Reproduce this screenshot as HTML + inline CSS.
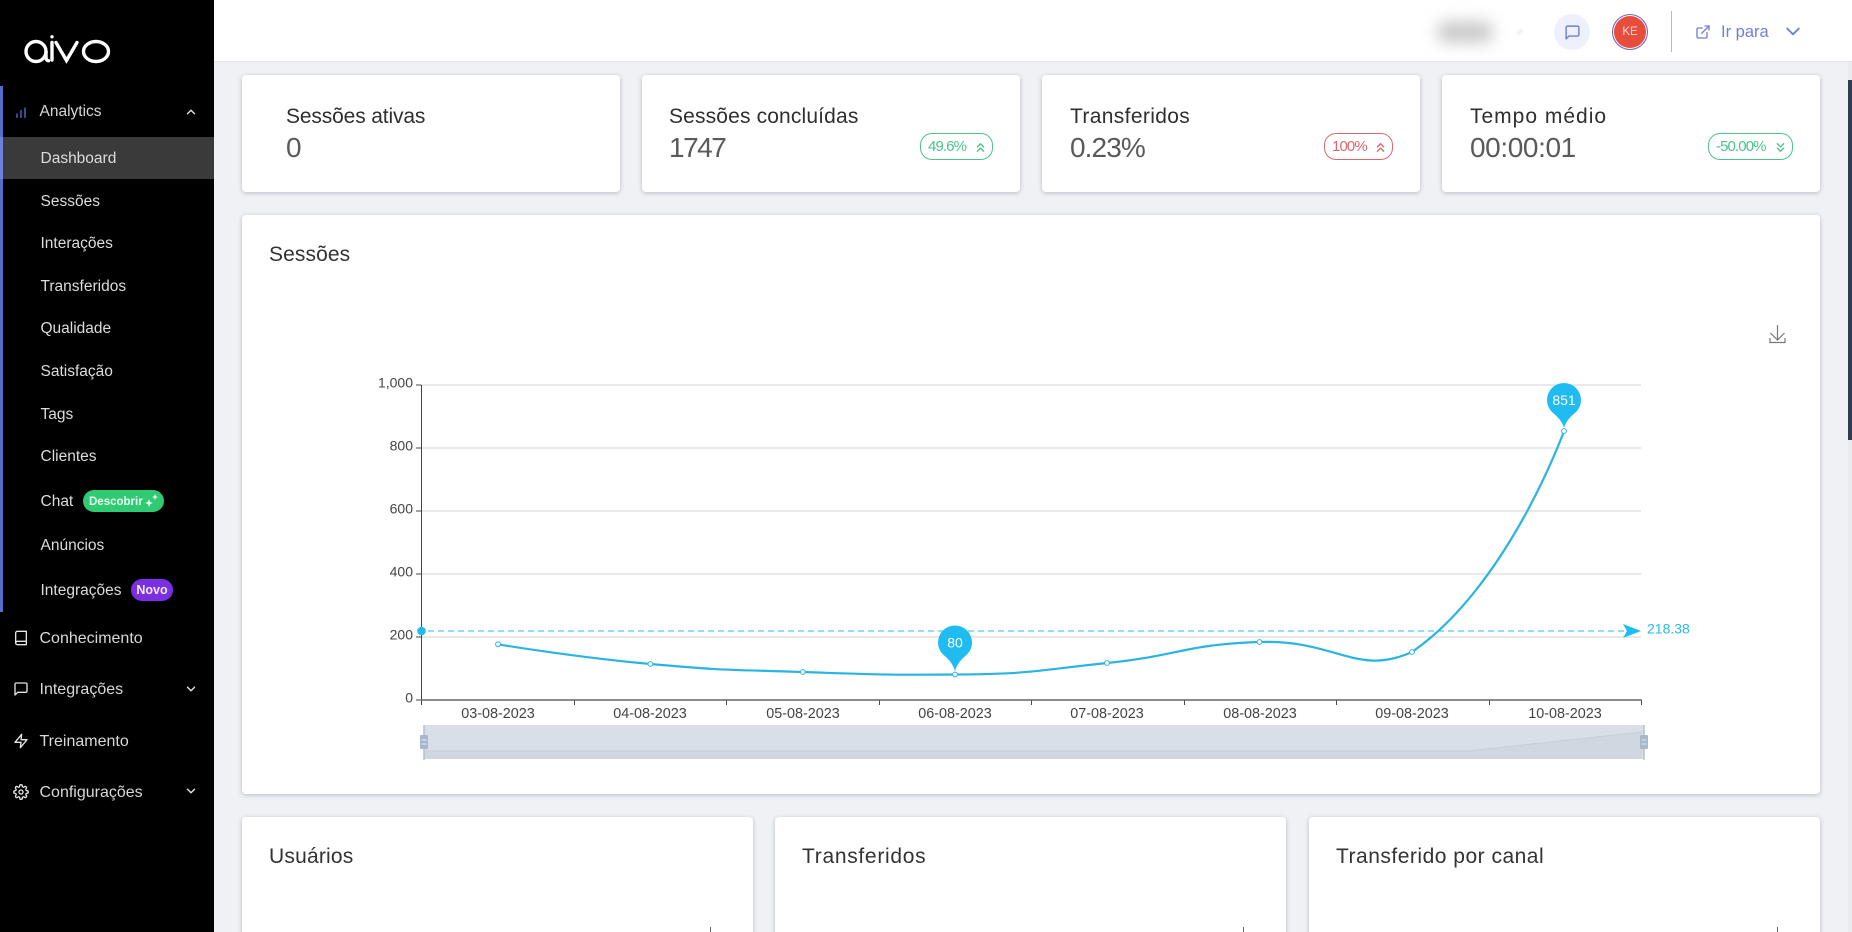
<!DOCTYPE html>
<html lang="pt">
<head>
<meta charset="utf-8">
<title>Aivo Dashboard</title>
<style>
html,body{margin:0;padding:0;width:1852px;height:932px;overflow:hidden;background:#eff1f5;font-family:"Liberation Sans",sans-serif}
*{box-sizing:border-box}
#wrap{position:relative;width:1852px;height:932px;overflow:hidden;background:#eff1f5}
.a{position:absolute}
#side{left:0;top:0;width:214px;height:932px;background:#000}
#top{left:214px;top:0;width:1638px;height:62px;background:#fff;border-bottom:1px solid #e4e6ea}
.n{position:absolute;left:40.5px;height:22px;line-height:22px;font-size:15.5px;color:#dcdcdc;white-space:nowrap}
.m{position:absolute;left:39.5px;height:22px;line-height:22px;font-size:16px;color:#d8d8d8;white-space:nowrap}
.i{position:absolute;left:13px;width:16px;height:16px;fill:none;stroke:#e4e4e4;stroke-width:2;stroke-linecap:round;stroke-linejoin:round}
.c{position:absolute;left:184px;width:14px;height:14px;fill:none;stroke:#e4e4e4;stroke-width:2.4;stroke-linecap:round;stroke-linejoin:round}
.card{position:absolute;background:#fff;border-radius:4px;box-shadow:0 1px 5px rgba(40,50,70,.28)}
.t{position:absolute;font-size:21px;line-height:26px;color:#2f2f2f;white-space:nowrap}
.v{position:absolute;font-size:28px;line-height:34px;color:#5a5a5a;white-space:nowrap}
.b{position:absolute;top:133px;height:27px;border-radius:12px;border:1px solid;font-size:15px;line-height:25px;letter-spacing:-.9px;white-space:nowrap;padding-left:7px;background:#fff}
.b svg{position:absolute;top:5.5px;width:15px;height:15px;fill:none;stroke:currentColor;stroke-width:2.2;stroke-linecap:round;stroke-linejoin:round}
.h{position:absolute;font-size:21px;line-height:26px;color:#333;white-space:nowrap}
svg text{font-family:"Liberation Sans",sans-serif}
</style>
</head>
<body>
<div id="wrap">
<div class="a" id="top"></div>

<!-- blurred account -->
<div class="a" style="left:1437px;top:22px;width:56px;height:20px;background:#c6c6c6;filter:blur(8px);border-radius:9px"></div>
<div class="a" style="left:1516px;top:31px;width:7px;height:1.5px;background:#e4e4e4;transform:rotate(-45deg);filter:blur(1px)"></div>
<div class="a" style="left:1554px;top:14px;width:36px;height:36px;border-radius:50%;background:#eef0fb"></div>
<svg class="a" style="left:1563.5px;top:23.5px;width:17px;height:17px;fill:none;stroke:#6f7fd6;stroke-width:2;stroke-linecap:round;stroke-linejoin:round" viewBox="0 0 24 24"><path d="M21 15a2 2 0 0 1-2 2H7l-4 4V5a2 2 0 0 1 2-2h14a2 2 0 0 1 2 2z"/></svg>
<div class="a" style="left:1612px;top:14px;width:36px;height:36px;border-radius:50%;background:#e74c3c;border:1px solid #7367c8;box-shadow:inset 0 0 0 1px #fff;color:#fbdcd8;font-size:11.5px;line-height:34px;text-align:center">KE</div>
<div class="a" style="left:1671px;top:11px;width:1px;height:41px;background:#b9bcc4"></div>
<svg class="a" style="left:1695px;top:24px;width:16px;height:16px;fill:none;stroke:#6f7fd6;stroke-width:2;stroke-linecap:round;stroke-linejoin:round" viewBox="0 0 24 24"><path d="M18 13v6a2 2 0 0 1-2 2H5a2 2 0 0 1-2-2V8a2 2 0 0 1 2-2h6"/><polyline points="15 3 21 3 21 9"/><line x1="10" y1="14" x2="21" y2="3"/></svg>
<div class="a" style="left:1721px;top:21px;font-size:16.5px;line-height:22px;color:#6f7fd6;white-space:nowrap">Ir para</div>
<svg class="a" style="left:1783px;top:21px;width:20px;height:20px;fill:none;stroke:#6f7fd6;stroke-width:2.2;stroke-linecap:round;stroke-linejoin:round" viewBox="0 0 24 24"><polyline points="5 9 12 16 19 9"/></svg>

<!-- scrollbar -->
<div class="a" style="left:1848px;top:62px;width:4px;height:870px;background:#e9ebef"></div>
<div class="a" style="left:1848px;top:80px;width:4px;height:360px;background:#2c3e50"></div>

<!-- sidebar -->
<div class="a" id="side">
  <svg class="a" style="left:22px;top:34px;width:92px;height:32px" viewBox="22 36 92 32" fill="none" stroke="#fff" stroke-width="3.4" stroke-linecap="round" role="img">
    <title>aivo</title>
    <circle cx="36" cy="53.5" r="10"/><path d="M46 53.5v5.5c0 2 .8 3.7 2.5 3.7"/>
    <path d="M52 44.5v17.5"/><circle cx="52" cy="38.8" r="1.7" fill="#fff" stroke="none"/>
    <path d="M56 44.5l10.5 18L77 44.5"/>
    <ellipse cx="96" cy="53.5" rx="12.5" ry="10"/>
  </svg>
  <div class="a" style="left:0;top:86px;width:3px;height:526px;background:#5a6cc9"></div>
  <div class="a" style="left:0;top:137px;width:214px;height:42px;background:#3a3a3a"></div>
  <div class="a" style="left:0;top:137px;width:3px;height:42px;background:#6f80dd"></div>

  <svg class="i" style="top:104px;stroke:#5a6cd6" viewBox="0 0 24 24"><line x1="18" y1="20" x2="18" y2="6"/><line x1="12" y1="20" x2="12" y2="10"/><line x1="6" y1="20" x2="6" y2="15"/></svg>
  <div class="m" style="top:101px;font-size:15.5px">Analytics</div>
  <svg class="c" style="top:105px" viewBox="0 0 24 24"><polyline points="6 15 12 9 18 15"/></svg>

  <div class="n" style="top:148px">Dashboard</div>
  <div class="n" style="top:191px">Sessões</div>
  <div class="n" style="top:233px">Interações</div>
  <div class="n" style="top:276px">Transferidos</div>
  <div class="n" style="top:318px">Qualidade</div>
  <div class="n" style="top:361px">Satisfação</div>
  <div class="n" style="top:404px">Tags</div>
  <div class="n" style="top:446px">Clientes</div>
  <div class="n" style="top:491px">Chat</div>
  <div class="a" style="left:83px;top:490px;width:81px;height:22px;border-radius:11px;background:#2ecb72;color:#e9fff2;font-size:11.5px;font-weight:bold;line-height:24px;padding-left:6px;white-space:nowrap">Descobrir</div>
  <svg class="a" style="left:144px;top:493px;width:16px;height:16px" viewBox="0 0 16 16" fill="#fff"><path d="M5 6l1 3 3 1-3 1-1 3-1-3-3-1 3-1z"/><path d="M11 1l.8 2.2L14 4l-2.2.8L11 7l-.8-2.2L8 4l2.2-.8z"/></svg>
  <div class="n" style="top:535px">Anúncios</div>
  <div class="n" style="top:580px">Integrações</div>
  <div class="a" style="left:131px;top:579px;width:42px;height:22px;border-radius:11px;background:#7b2fe3;color:#f2e9ff;font-size:12.5px;font-weight:bold;line-height:23px;text-align:center">Novo</div>

  <svg class="i" style="top:630px" viewBox="0 0 24 24"><path d="M4 19.5A2.5 2.5 0 0 1 6.5 17H20"/><path d="M6.5 2H20v20H6.5A2.5 2.5 0 0 1 4 19.5v-15A2.5 2.5 0 0 1 6.5 2z"/></svg>
  <div class="m" style="top:628px">Conhecimento</div>
  <svg class="i" style="top:681px" viewBox="0 0 24 24"><path d="M21 15a2 2 0 0 1-2 2H7l-4 4V5a2 2 0 0 1 2-2h14a2 2 0 0 1 2 2z"/></svg>
  <div class="m" style="top:679px">Integrações</div>
  <svg class="c" style="top:682px" viewBox="0 0 24 24"><polyline points="6 9 12 15 18 9"/></svg>
  <svg class="i" style="top:733px" viewBox="0 0 24 24"><polygon points="13 2 3 14 12 14 11 22 21 10 12 10 13 2"/></svg>
  <div class="m" style="top:731px">Treinamento</div>
  <svg class="i" style="top:784px" viewBox="0 0 24 24"><circle cx="12" cy="12" r="3"/><path d="M19.4 15a1.65 1.65 0 0 0 .33 1.82l.06.06a2 2 0 0 1 0 2.83 2 2 0 0 1-2.83 0l-.06-.06a1.65 1.65 0 0 0-1.82-.33 1.65 1.65 0 0 0-1 1.51V21a2 2 0 0 1-2 2 2 2 0 0 1-2-2v-.09A1.65 1.65 0 0 0 9 19.4a1.65 1.65 0 0 0-1.82.33l-.06.06a2 2 0 0 1-2.83 0 2 2 0 0 1 0-2.83l.06-.06a1.65 1.65 0 0 0 .33-1.82 1.65 1.65 0 0 0-1.51-1H3a2 2 0 0 1-2-2 2 2 0 0 1 2-2h.09A1.65 1.65 0 0 0 4.6 9a1.65 1.65 0 0 0-.33-1.82l-.06-.06a2 2 0 0 1 0-2.83 2 2 0 0 1 2.83 0l.06.06a1.65 1.65 0 0 0 1.82.33H9a1.65 1.65 0 0 0 1-1.51V3a2 2 0 0 1 2-2 2 2 0 0 1 2 2v.09a1.65 1.65 0 0 0 1 1.51 1.65 1.65 0 0 0 1.82-.33l.06-.06a2 2 0 0 1 2.83 0 2 2 0 0 1 0 2.83l-.06.06a1.65 1.65 0 0 0-.33 1.82V9a1.65 1.65 0 0 0 1.51 1H21a2 2 0 0 1 2 2 2 2 0 0 1-2 2h-.09a1.65 1.65 0 0 0-1.51 1z"/></svg>
  <div class="m" style="top:782px">Configurações</div>
  <svg class="c" style="top:784px" viewBox="0 0 24 24"><polyline points="6 9 12 15 18 9"/></svg>
</div>

<!-- stat cards -->
<div class="card" style="left:242px;top:75px;width:378px;height:117px"></div>
<div class="card" style="left:642px;top:75px;width:378px;height:117px"></div>
<div class="card" style="left:1042px;top:75px;width:378px;height:117px"></div>
<div class="card" style="left:1442px;top:75px;width:378px;height:117px"></div>

<div class="t" style="left:286px;top:104px;letter-spacing:-.14px">Sessões ativas</div>
<div class="v" style="left:286px;top:131px">0</div>
<div class="t" style="left:669px;top:104px;letter-spacing:.15px">Sessões concluídas</div>
<div class="v" style="left:669px;top:131px;letter-spacing:-1.5px">1747</div>
<div class="b" style="left:920px;width:73px;color:#4cc38a;border-color:#4cc38a">49.6%<svg style="left:52px" viewBox="0 0 24 24"><polyline points="17 11 12 6 7 11"/><polyline points="17 18 12 13 7 18"/></svg></div>
<div class="t" style="left:1070px;top:104px;letter-spacing:.35px">Transferidos</div>
<div class="v" style="left:1070px;top:131px;letter-spacing:-.9px">0.23%</div>
<div class="b" style="left:1324px;width:69px;color:#d9696c;border-color:#d9696c">100%<svg style="left:48px" viewBox="0 0 24 24"><polyline points="17 11 12 6 7 11"/><polyline points="17 18 12 13 7 18"/></svg></div>
<div class="t" style="left:1470px;top:104px;letter-spacing:1px">Tempo médio</div>
<div class="v" style="left:1470px;top:131px;letter-spacing:-.4px">00:00:01</div>
<div class="b" style="left:1708px;width:85px;color:#4cc38a;border-color:#4cc38a">-50.00%<svg style="left:64px" viewBox="0 0 24 24"><polyline points="7 13 12 18 17 13"/><polyline points="7 6 12 11 17 6"/></svg></div>

<!-- main chart card -->
<div class="card" style="left:242px;top:215px;width:1578px;height:579px"></div>
<div class="h" style="left:269px;top:242px;letter-spacing:.1px">Sessões</div>

<svg class="a" style="left:0;top:0;width:1852px;height:932px;pointer-events:none" viewBox="0 0 1852 932">
  <!-- download icon -->
  <g fill="none" stroke="#777" stroke-width="1.2">
    <path d="M1777.5 325v15M1770.5 333l7 7 7-7M1770 338v4.5h15v-4.5"/>
  </g>
  <!-- grid -->
  <g stroke="#e2e2e2" stroke-width="1.4">
    <line x1="421" y1="385" x2="1641" y2="385"/>
    <line x1="421" y1="448" x2="1641" y2="448"/>
    <line x1="421" y1="511" x2="1641" y2="511"/>
    <line x1="421" y1="574" x2="1641" y2="574"/>
    <line x1="421" y1="637" x2="1641" y2="637"/>
  </g>
  <!-- axes -->
  <g stroke="#444" stroke-width="1">
    <line x1="421.5" y1="385" x2="421.5" y2="705"/>
    <line x1="416" y1="385" x2="421" y2="385"/>
    <line x1="416" y1="448" x2="421" y2="448"/>
    <line x1="416" y1="511" x2="421" y2="511"/>
    <line x1="416" y1="574" x2="421" y2="574"/>
    <line x1="416" y1="637" x2="421" y2="637"/>
    <line x1="416" y1="700" x2="421" y2="700"/>
    <line x1="574.5" y1="700" x2="574.5" y2="705"/>
    <line x1="726.5" y1="700" x2="726.5" y2="705"/>
    <line x1="879.5" y1="700" x2="879.5" y2="705"/>
    <line x1="1031.5" y1="700" x2="1031.5" y2="705"/>
    <line x1="1184.5" y1="700" x2="1184.5" y2="705"/>
    <line x1="1336.5" y1="700" x2="1336.5" y2="705"/>
    <line x1="1489.5" y1="700" x2="1489.5" y2="705"/>
    <line x1="1641.5" y1="700" x2="1641.5" y2="705"/>
  </g>
  <line x1="421" y1="700" x2="1642" y2="700" stroke="#666" stroke-width="1.4"/>
  <g font-size="14" fill="#444" text-anchor="end">
    <text x="413" y="387.5">1,000</text>
    <text x="413" y="450.5">800</text>
    <text x="413" y="513.5">600</text>
    <text x="413" y="576.5">400</text>
    <text x="413" y="639.5">200</text>
    <text x="413" y="702.5">0</text>
  </g>
  <g font-size="14.4" fill="#444" text-anchor="middle">
    <text x="498" y="718">03-08-2023</text>
    <text x="650" y="718">04-08-2023</text>
    <text x="803" y="718">05-08-2023</text>
    <text x="955" y="718">06-08-2023</text>
    <text x="1107" y="718">07-08-2023</text>
    <text x="1260" y="718">08-08-2023</text>
    <text x="1412" y="718">09-08-2023</text>
    <text x="1565" y="718">10-08-2023</text>
  </g>
  <!-- mean line -->
  <line x1="428" y1="631" x2="1630" y2="631" stroke="#25bbef" stroke-width="1" stroke-dasharray="6 4"/>
  <circle cx="421.5" cy="631" r="4.3" fill="#1fbcf2"/>
  <path d="M1623 624L1641 631L1623 638L1627 631Z" fill="#1fbcf2"/>
  <text x="1647" y="633.5" font-size="14" fill="#29b9ee">218.38</text>
  <!-- series -->
  <path d="M498 644.3C498 644.3 574.2 657.1 650.4 664C726.6 670.9 726.65 669.4 802.8 672C879 674.6 879 675 955 674.5C1031 674 1030.9 671.1 1107 663C1183 654.9 1183.4 644.7 1259.5 642C1335.4 639.3 1356.7 677 1412 652C1509 584.8 1564 431 1564 431" fill="none" stroke="#2ab4e2" stroke-width="2.2"/>
  <g fill="#fff" stroke="#2ab4e2" stroke-width="1">
    <circle cx="498" cy="644.3" r="2.4"/>
    <circle cx="650.4" cy="664" r="2.4"/>
    <circle cx="802.8" cy="672" r="2.4"/>
    <circle cx="955" cy="674.5" r="2.4"/>
    <circle cx="1107" cy="663" r="2.4"/>
    <circle cx="1259.5" cy="642" r="2.4"/>
    <circle cx="1412" cy="652" r="2.4"/>
    <circle cx="1564" cy="431" r="2.4"/>
  </g>
  <!-- pins -->
  <path transform="translate(955 642.5)" d="M0 29C-1.5 22-6 17-12 12A17 17 0 1 1 12 12C6 17 1.5 22 0 29Z" fill="#1fbcf2"/>
  <path transform="translate(1564 400)" d="M0 28C-1.5 22-6 17-12 12A17 17 0 1 1 12 12C6 17 1.5 22 0 28Z" fill="#1fbcf2"/>
  <text x="955" y="647.5" font-size="14" fill="#fff" text-anchor="middle">80</text>
  <text x="1564" y="405" font-size="14" fill="#fff" text-anchor="middle">851</text>
  <!-- slider -->
  <rect x="424" y="725" width="1220" height="34" fill="#d8dfe8"/>
  <path d="M424 751H1468L1642 732V759H424Z" fill="#d0d7e1"/>
  <path d="M424 751H1468L1642 732" fill="none" stroke="#c6ced9" stroke-width="1"/>
  <line x1="424" y1="725" x2="424" y2="760" stroke="#b4bfd2" stroke-width="1.5"/>
  <line x1="1644" y1="725" x2="1644" y2="760" stroke="#b4bfd2" stroke-width="1.5"/>
  <rect x="420" y="735" width="8" height="14" rx="1" fill="#a7b7cc"/>
  <rect x="1640" y="735" width="8" height="14" rx="1" fill="#a7b7cc"/>
  <g stroke="#e6ebf2" stroke-width="1">
    <line x1="421.5" y1="740" x2="426.5" y2="740"/>
    <line x1="421.5" y1="744" x2="426.5" y2="744"/>
    <line x1="1641.5" y1="740" x2="1646.5" y2="740"/>
    <line x1="1641.5" y1="744" x2="1646.5" y2="744"/>
  </g>
</svg>

<!-- lower cards -->
<div class="card" style="left:242px;top:817px;width:511px;height:130px"></div>
<div class="card" style="left:775px;top:817px;width:511px;height:130px"></div>
<div class="card" style="left:1309px;top:817px;width:511px;height:130px"></div>
<div class="h" style="left:269px;top:844px;letter-spacing:.2px">Usuários</div>
<div class="h" style="left:802px;top:844px;letter-spacing:.7px">Transferidos</div>
<div class="h" style="left:1336px;top:844px;letter-spacing:.5px">Transferido por canal</div>
<div class="a" style="left:710px;top:927px;width:1px;height:5px;background:#666"></div>
<div class="a" style="left:1243px;top:927px;width:1px;height:5px;background:#666"></div>
<div class="a" style="left:1777px;top:927px;width:1px;height:5px;background:#666"></div>
</div>
</body>
</html>
